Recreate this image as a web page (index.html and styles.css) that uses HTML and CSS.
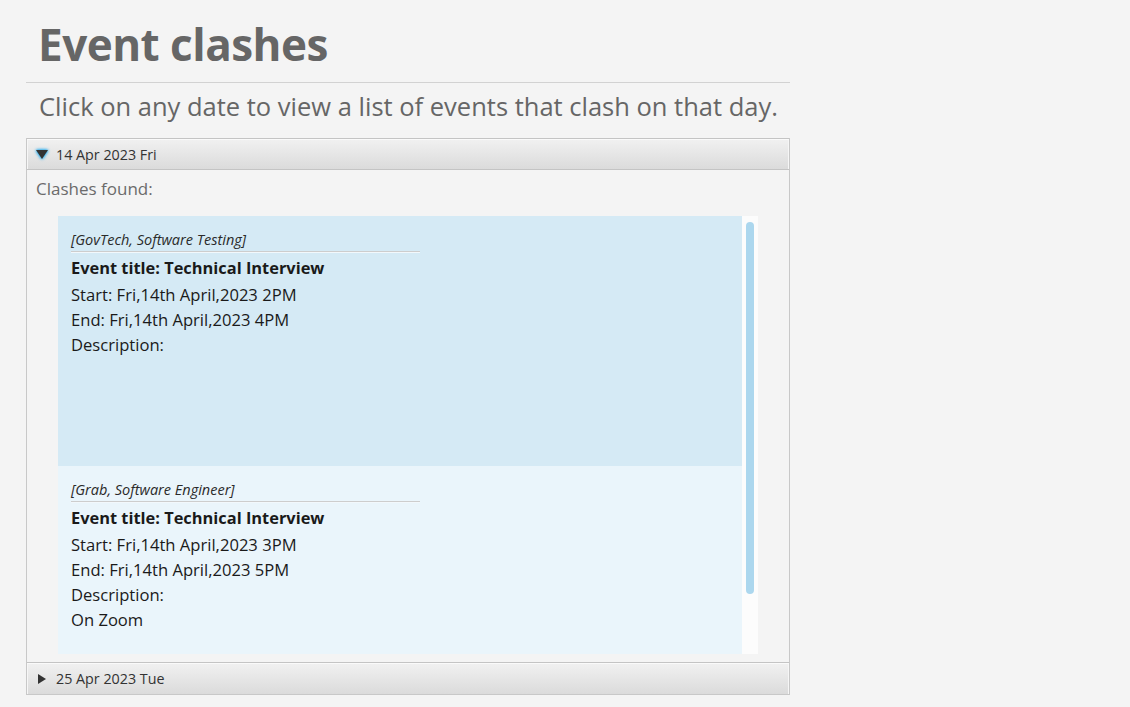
FILE: index.html
```html
<!DOCTYPE html>
<html>
<head>
<meta charset="utf-8">
<link rel="stylesheet" href="styles.css">
</head>
<body>
<div class="page">
  <h1 class="title">Event clashes</h1>
  <div class="rule"></div>
  <p class="subtitle">Click on any date to view a list of events that clash on that day.</p>
  <div class="accordion">
    <div class="pane-header">
      <span class="arrow-down"></span>
      <span class="pane-title">14 Apr 2023 Fri</span>
    </div>
    <div class="pane-body">
      <div class="found">Clashes found:</div>
      <div class="list">
        <div class="cells">
          <div class="cell cell-a">
            <div class="tag">[GovTech, Software Testing]</div>
            <div class="sep"></div>
            <div class="ev-title">Event title: Technical Interview</div>
            <div class="line">Start: Fri,14th April,2023 2PM</div>
            <div class="line">End: Fri,14th April,2023 4PM</div>
            <div class="line">Description:</div>
          </div>
          <div class="cell cell-b">
            <div class="tag">[Grab, Software Engineer]</div>
            <div class="sep"></div>
            <div class="ev-title">Event title: Technical Interview</div>
            <div class="line">Start: Fri,14th April,2023 3PM</div>
            <div class="line">End: Fri,14th April,2023 5PM</div>
            <div class="line">Description:</div>
            <div class="line">On Zoom</div>
          </div>
        </div>
        <div class="scrollbar"><div class="thumb"></div></div>
      </div>
    </div>
    <div class="pane-header pane-header-b">
      <span class="arrow-right"></span>
      <span class="pane-title">25 Apr 2023 Tue</span>
    </div>
  </div>
</div>
</body>
</html>
```

FILE: styles.css
```css
html, body {
  margin: 0;
  padding: 0;
  background: #f4f4f4;
  font-family: "Open Sans", "Noto Sans", sans-serif;
}
.page {
  margin-left: 26px;
  width: 764px;
}
.title {
  margin: 0;
  padding: 16px 0 0 12px;
  height: 66px;
  box-sizing: border-box;
  font-size: 44px;
  line-height: 56px;
  font-weight: 700;
  color: #666666;
  letter-spacing: -0.5px;
}
.rule {
  height: 0;
  border-top: 1px solid #d2d2d2;
  margin-top: 16px;
}
.subtitle {
  margin: 0;
  padding: 6px 0 0 13px;
  height: 55px;
  box-sizing: border-box;
  font-size: 25.5px;
  line-height: 34px;
  color: #666666;
}
.accordion {
  border: 1px solid #c8c8c8;
  border-top: none;
  width: 764px;
  box-sizing: border-box;
}
.pane-header {
  height: 32px;
  box-sizing: border-box;
  border-top: 1px solid #c4c4c4;
  border-bottom: 1px solid #c4c4c4;
  box-shadow: inset 0 1px 0 #fafafa, inset 1px 0 0 #f6f6f6, inset -1px 0 0 #f6f6f6;
  background: linear-gradient(#f1f1f1, #dbdbdb);
  display: flex;
  align-items: center;
  padding-left: 9px;
  gap: 8px;
}
.pane-header-b {
  border-bottom: none;
  padding-left: 11px;
  gap: 10px;
}
.pane-title {
  font-size: 14.3px;
  color: #333333;
}
.arrow-down {
  width: 0;
  height: 0;
  border-left: 6px solid transparent;
  border-right: 6px solid transparent;
  border-top: 9px solid #333;
  filter: drop-shadow(0 0 1.5px #1fa8ee) drop-shadow(0 0 1px #44b8f0);
}
.arrow-right {
  width: 0;
  height: 0;
  border-top: 5px solid transparent;
  border-bottom: 5px solid transparent;
  border-left: 8px solid #333;
}
.pane-body {
  height: 492px;
  box-sizing: border-box;
  background: #f4f4f4;
  padding: 8px 0 0 9px;
}
.found {
  font-size: 17px;
  line-height: 22px;
  color: #6b6b6b;
  height: 38px;
}
.list {
  margin-left: 22px;
  width: 700px;
  height: 438px;
  background: #fcfcfc;
  display: flex;
  overflow: hidden;
}
.cells {
  width: 684px;
  display: flex;
  flex-direction: column;
}
.cell {
  padding: 14px 0 0 13px;
  box-sizing: border-box;
  color: #1a1a1a;
  flex-shrink: 0;
}
.cell-a {
  background: #d5eaf5;
  height: 250px;
}
.cell-b {
  background: #eaf5fb;
  flex: 1;
}
.tag {
  font-size: 14.5px;
  font-style: italic;
  line-height: 20px;
  color: #2a2a2a;
}
.sep {
  width: 349px;
  height: 1px;
  background: #cdcdcd;
  border-bottom: 1px solid #f2f8fc;
  margin: 1px 0 1px 0;
}
.ev-title {
  font-size: 16.4px;
  font-weight: 700;
  line-height: 28px;
}
.line {
  font-size: 16.6px;
  line-height: 25px;
}
.scrollbar {
  width: 16px;
  display: flex;
  justify-content: center;
  padding-top: 6px;
}
.thumb {
  width: 8px;
  height: 372px;
  background: #acd7ee;
  border-radius: 4px;
}
```
